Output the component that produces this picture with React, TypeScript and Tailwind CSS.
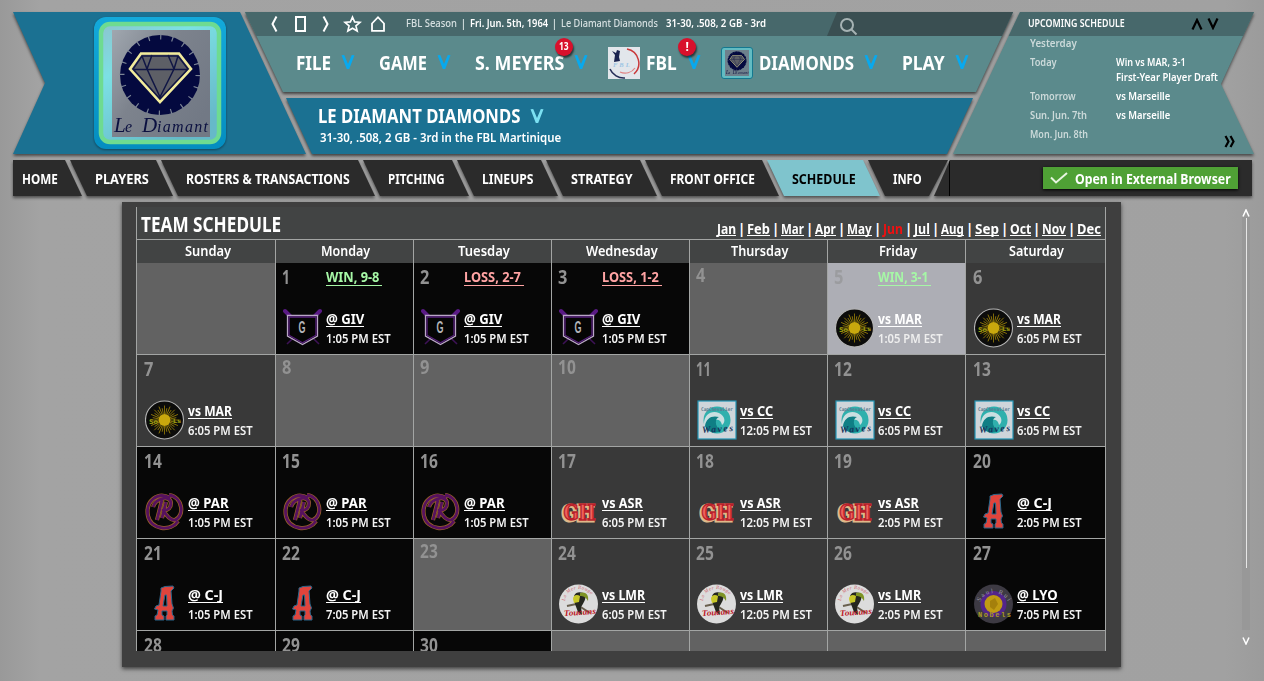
import { useLayoutEffect, useRef, useState } from 'react'
import type { ReactNode } from 'react'
import clsx from 'clsx'

// Condensed label: squeezes its text horizontally into the given width
function Fit({ w, className, children }: { w: number; className?: string; children: ReactNode }) {
  const ref = useRef<HTMLSpanElement>(null)
  const [scale, setScale] = useState(1)

  useLayoutEffect(() => {
    if (ref.current) setScale(w / ref.current.offsetWidth)
  }, [w])

  return (
    <span className={clsx('block shrink-0 whitespace-nowrap', className)} style={{ width: w }}>
      <span ref={ref} className="inline-block origin-left align-top" style={{ transform: `scaleX(${scale})` }}>
        {children}
      </span>
    </span>
  )
}

function Caret({ className }: { className: string }) {
  return (
    <svg viewBox="0 0 14 15" className={className} fill="currentColor">
      <path d="M0.500 0.300 L3.200 0 L7 9 L10.800 0 L13.500 0.300 L8.200 14 H5.800 Z" />
    </svg>
  )
}

function DiamantArt() {
  return (
    <>
      <circle cx="48" cy="45" r="40" fill="#04093f" />
      <circle cx="48" cy="45" r="38" fill="none" stroke="#7c8595" strokeWidth="5" strokeDasharray="1.2 10.73" />
      <path d="M29 23.5 H67 L79 39 L48 72 L18 39 Z" fill="#5d5f66" stroke="#f2ec9c" strokeWidth="2.6" />
      <path d="M30 26 H66 L76 39 L48 69 L21 39 Z M21 39.500 H76 M40 25 L35 39 L48 67 L62 39 L56 25 M30 26 L35 39 M66 26 L62 39" fill="none" stroke="#101645" strokeWidth="1.5" />
      <g fontFamily="Liberation Serif, serif" fontStyle="italic" fill="#0b1040">
        <text x="2" y="102" fontSize="21">L</text>
        <text x="13" y="102" fontSize="16">e</text>
        <text x="30" y="102" fontSize="21">D</text>
        <text x="45" y="102" textLength="51" fontSize="16">iamant</text>
      </g>
    </>
  )
}

function TeamBadge() {
  return (
    <svg viewBox="0 0 132 132" className="h-[132px] w-[132px] [filter:drop-shadow(0_1px_1px_rgba(0,0,0,0.4))]">
      <defs>
        <linearGradient id="plate" x1="0" y1="0" x2="0.6" y2="1">
          <stop offset="0" stopColor="#8cc4cf" />
          <stop offset="0.35" stopColor="#7ce0e4" />
          <stop offset="1" stopColor="#66b9c9" />
        </linearGradient>
        <linearGradient id="steel" x1="0" y1="0" x2="1" y2="0.7">
          <stop offset="0" stopColor="#a0a7af" />
          <stop offset="0.45" stopColor="#7d838d" />
          <stop offset="1" stopColor="#727985" />
        </linearGradient>
        <linearGradient id="rim" x1="0" y1="0" x2="0" y2="1">
          <stop offset="0" stopColor="#13aadb" />
          <stop offset="1" stopColor="#048dc0" />
        </linearGradient>
      </defs>
      <rect width="132" height="132" rx="12" fill="url(#rim)" />
      <rect x="7" y="7" width="118" height="118" rx="9" fill="url(#plate)" stroke="#6edb91" strokeWidth="4.500" />
      <rect x="18" y="13" width="98" height="107" fill="url(#steel)" />
      <g transform="translate(18 13)"><DiamantArt /></g>
    </svg>
  )
}

function SmallDiamant() {
  return (
    <svg viewBox="0 0 32 32" className="ml-5 size-8 shrink-0">
      <rect x="0.5" y="0.5" width="31" height="31" rx="2.5" fill="#62bcc2" stroke="#14788f" />
      <rect x="4" y="3" width="24" height="26" fill="#6e808c" />
      <g transform="translate(4.500 3) scale(0.24)"><DiamantArt /></g>
    </svg>
  )
}

function LeagueLogo() {
  return (
    <svg viewBox="0 0 32 32" className="ml-5 size-8 shrink-0">
      <rect width="32" height="32" fill="#e2e6eb" />
      <path d="M19 2 A14.500 14.500 0 0 1 26 27" fill="none" stroke="#c9393b" strokeWidth="1.5" />
      <path d="M12 25 A12 12 0 0 0 27 21" fill="none" stroke="#e08383" strokeWidth="1.2" />
      <path d="M2 22 A15 15 0 0 0 17 31" fill="none" stroke="#252d57" strokeWidth="1.6" />
      <path d="M4 4 L8 6 L9 3 L12 4 L11 10 L12 14 L6 15 L7 8 Z" fill="#1b2350" />
      <text x="5" y="20" fontFamily="Liberation Serif, serif" fontStyle="italic" fontWeight="bold" fontSize="6.500" letterSpacing="2" fill="#9cc5e4">FBL</text>
    </svg>
  )
}

function Griffons() {
  return (
    <>
      <path d="M3 4 L36 36 M37 4 L4 36" stroke="#3d1256" strokeWidth="1.6" />
      <path d="M2 3 L8 9 M37 3 L31 9" stroke="#5a1a85" strokeWidth="4" strokeLinecap="round" />
      <path d="M4.500 7.500 H34.500 V28 L19.500 36.500 L4.500 28 Z" fill="#050505" stroke="#b9a6c6" strokeWidth="1.3" />
      <path d="M6 9 H33 V27.200 L19.500 34.800 L6 27.200 Z" fill="none" stroke="#58207e" strokeWidth="1.3" />
      <text x="15.500" y="24.500" textLength="7" lengthAdjust="spacingAndGlyphs" fontFamily="Liberation Sans, sans-serif" fontWeight="bold" fontSize="16" fill="#b4b4b8">G</text>
    </>
  )
}

const RAYS = Array.from({ length: 32 }, (_, i) => i * 11.25)

function Sols() {
  return (
    <>
      <circle cx="19.500" cy="20" r="19" fill="#0c0c0b" stroke="#b5b5b5" strokeWidth="1.1" />
      {RAYS.map((a, i) => (
        <path key={a} d={i % 2 ? 'M19.500 8 V14' : 'M19.500 5.500 V14'} stroke="#9b8108" strokeWidth="0.8" transform={`rotate(${a} 19.500 20)`} />
      ))}
      <circle cx="19.500" cy="20" r="6" fill="#c9a80d" />
      <g fontFamily="DejaVu Sans, sans-serif" fontWeight="bold" fill="#98980f">
        <text x="4" y="24" textLength="9" lengthAdjust="spacingAndGlyphs" fontSize="6.500">So</text>
        <text x="28" y="23" textLength="8" lengthAdjust="spacingAndGlyphs" fontSize="6">Ls</text>
      </g>
    </>
  )
}

function Waves() {
  return (
    <>
      <rect x="1" y="1" width="38" height="38" fill="#cfd5da" stroke="#2294b4" strokeWidth="1.2" />
      <circle cx="20" cy="20" r="13.500" fill="#2fb0ad" />
      <path d="M7 24 C7 14 15 10 22 13 C28 16 29 22 25 25 C24 19 18 18 15 23 C13 27 16 30 19 32 C12 32 7 29 7 24 Z" fill="#c9dfe1" />
      <path d="M8 26 C9 18 15 15 22 17 C18 18 17 26 24 31 C18 34 10 32 8 26 Z" fill="#0f7f85" />
      <text x="4" y="10.500" textLength="32" lengthAdjust="spacingAndGlyphs" fontFamily="DejaVu Sans Mono, monospace" fontWeight="bold" fontSize="5" fill="#5c7a90">CapChevalier</text>
      <text x="5" y="32" textLength="31" fontFamily="Liberation Serif, serif" fontStyle="italic" fontWeight="bold" fontSize="9.500" fill="#16355c" transform="rotate(-4 20 30)">Waves</text>
    </>
  )
}

function Royals() {
  const swirl = 'M8 15 C10 7 25 2 26 11 C26 17 21 19 18 18 C21 23 25 29 30 28 C40 24 38 5 24 3 M17 8 L12 28 M21 10 L17 26 M25 6 C13 -1 0 9 3 24 C6 38 26 40 33 29'
  return (
    <>
      <path d={swirl} fill="none" stroke="#9a6526" strokeWidth="4.200" strokeLinejoin="round" />
      <path d={swirl} fill="none" stroke="#57125e" strokeWidth="2.800" strokeLinejoin="round" />
    </>
  )
}

function GrandHotel() {
  return (
    <g fontFamily="DejaVu Serif, serif" fontWeight="bold" fontSize="22">
      <g fill="#e0b98a" stroke="#e0b98a" strokeWidth="3">
        <text x="3" y="29" textLength="15" lengthAdjust="spacingAndGlyphs">G</text>
        <text x="18" y="29" textLength="17" lengthAdjust="spacingAndGlyphs">H</text>
      </g>
      <g fill="#f0625c" stroke="#b81f2b" strokeWidth="1.400">
        <text x="4.500" y="27.500" textLength="15" lengthAdjust="spacingAndGlyphs">G</text>
        <text x="19.500" y="27.500" textLength="17" lengthAdjust="spacingAndGlyphs">H</text>
      </g>
    </g>
  )
}

function Aces() {
  return (
    <path
      d="M16 4 L20 2.500 L28 2 L29 4 L26 7 L27 20 L28.500 24 L27 27 L27.500 31 L29 32 V36 H21 V32 L22 31 V27 H17 L17 31 L19 32 V36 H10 V32 L12 31 L13 26 L9.500 25 L11 22 L14 21 L16 7 Z M20 11 L18 22 H22 L21.500 11 Z"
      fill="#e0443c"
      fillRule="evenodd"
      stroke="#28678c"
      strokeWidth="1"
    />
  )
}

function Toucans() {
  return (
    <>
      <circle cx="19.500" cy="20" r="19.500" fill="#dcdcdc" />
      <path id="arc" d="M6 17 A14 12 0 0 1 34 17" fill="none" />
      <text fontFamily="Liberation Serif, serif" fontStyle="italic" fontSize="5" fill="#cc5968"><textPath href="#arc" textLength="34">La Mer Rouge</textPath></text>
      <path d="M8 22 L17 20 L31 29" stroke="#69604f" strokeWidth="2" fill="none" />
      <path d="M15 12 C17 7 23 8 26 10 C28 14 24 20 22 23 L23 31 L19 28 L16 20 Z" fill="#25271f" />
      <path d="M14 15 C14 11 18 10 21 12 L20 18 L15 19 Z" fill="#c8c829" />
      <path d="M21 9 C27 7 30 11 29 17 C27 13 24 12 21 12 Z" fill="#7f9424" />
      <text x="5" y="31" textLength="32" lengthAdjust="spacingAndGlyphs" fontFamily="Liberation Serif, serif" fontStyle="italic" fontWeight="bold" fontSize="8.500" fill="#bd1524" transform="rotate(-4 20 30)">Toucans</text>
    </>
  )
}

function Nobels() {
  return (
    <>
      <circle cx="19.500" cy="20" r="19.500" fill="#3d3a43" />
      <circle cx="19.500" cy="20" r="13" fill="#53258b" />
      <circle cx="19.500" cy="20" r="9" fill="#c09b13" />
      <path d="M16 17 L21 14 L24 20 L20 26 L16 23 Z" fill="#a4800c" />
      <path id="rim-arc" d="M6 18 A15 14 0 0 1 34 18" fill="none" />
      <text fontFamily="Liberation Serif, serif" fontSize="6.500" fill="#9b98a3"><textPath href="#rim-arc" textLength="39">Saul Ruiz</textPath></text>
      <text x="4" y="32.500" textLength="33" fontFamily="Liberation Mono, monospace" fontWeight="bold" fontSize="7" fill="#aa9b22">Nobels</text>
    </>
  )
}

type Team = { label: string; w: number; art: ReactNode }

const GIV: Team = { label: '@ GIV', w: 38, art: <Griffons /> }
const MAR: Team = { label: 'vs MAR', w: 44, art: <Sols /> }
const CC: Team = { label: 'vs CC', w: 33, art: <Waves /> }
const PAR: Team = { label: '@ PAR', w: 41, art: <Royals /> }
const ASR: Team = { label: 'vs ASR', w: 41, art: <GrandHotel /> }
const CJ: Team = { label: '@ C-J', w: 35, art: <Aces /> }
const LMR: Team = { label: 'vs LMR', w: 43, art: <Toucans /> }
const LYO: Team = { label: '@ LYO', w: 41, art: <Nobels /> }

type Day = { day?: number; team?: Team; time?: string; result?: string; resultW?: number; today?: boolean; away?: boolean }

const days: Day[] = [
  {},
  { day: 1, team: GIV, time: '1:05', result: 'WIN, 9-8', resultW: 53 },
  { day: 2, team: GIV, time: '1:05', result: 'LOSS, 2-7', resultW: 57 },
  { day: 3, team: GIV, time: '1:05', result: 'LOSS, 1-2', resultW: 57 },
  { day: 4 },
  { day: 5, team: MAR, time: '1:05', result: 'WIN, 3-1', resultW: 50, today: true },
  { day: 6, team: MAR, time: '6:05' },
  { day: 7, team: MAR, time: '6:05' },
  { day: 8 },
  { day: 9 },
  { day: 10 },
  { day: 11, team: CC, time: '12:05' },
  { day: 12, team: CC, time: '6:05' },
  { day: 13, team: CC, time: '6:05' },
  { day: 14, team: PAR, time: '1:05' },
  { day: 15, team: PAR, time: '1:05' },
  { day: 16, team: PAR, time: '1:05' },
  { day: 17, team: ASR, time: '6:05' },
  { day: 18, team: ASR, time: '12:05' },
  { day: 19, team: ASR, time: '2:05' },
  { day: 20, team: CJ, time: '2:05' },
  { day: 21, team: CJ, time: '1:05' },
  { day: 22, team: CJ, time: '7:05' },
  { day: 23 },
  { day: 24, team: LMR, time: '6:05' },
  { day: 25, team: LMR, time: '12:05' },
  { day: 26, team: LMR, time: '2:05' },
  { day: 27, team: LYO, time: '7:05' },
  { day: 28, away: true },
  { day: 29, away: true },
  { day: 30, away: true },
  {},
  {},
  {},
  {},
]

const weekdays = [
  { name: 'Sunday', w: 46, pad: 'pl-1' },
  { name: 'Monday', w: 49, pad: 'pl-0.5' },
  { name: 'Tuesday', w: 52, pad: 'pl-0.5' },
  { name: 'Wednesday', w: 72, pad: 'pl-0.5' },
  { name: 'Thursday', w: 57, pad: 'pl-0.5' },
  { name: 'Friday', w: 38, pad: 'pl-0.5' },
  { name: 'Saturday', w: 55, pad: 'pl-0.5' },
]

const months = [
  { name: 'Jan', w: 19 },
  { name: 'Feb', w: 23 },
  { name: 'Mar', w: 23 },
  { name: 'Apr', w: 21 },
  { name: 'May', w: 25 },
  { name: 'Jun', w: 20 },
  { name: 'Jul', w: 16 },
  { name: 'Aug', w: 23 },
  { name: 'Sep', w: 24 },
  { name: 'Oct', w: 21 },
  { name: 'Nov', w: 24 },
  { name: 'Dec', w: 24 },
]

const tabs = [
  { name: 'PLAYERS', w: 54, box: 'w-[103px]' },
  { name: 'ROSTERS & TRANSACTIONS', w: 164, box: 'w-[214px]' },
  { name: 'PITCHING', w: 57, box: 'w-[106px]' },
  { name: 'LINEUPS', w: 52, box: 'w-[101px]' },
  { name: 'STRATEGY', w: 62, box: 'w-[111px]' },
  { name: 'FRONT OFFICE', w: 85, box: 'w-[134px]' },
  { name: 'SCHEDULE', w: 64, box: 'w-[113px]', active: true },
]

const upcoming = [
  { day: 'Yesterday', dw: 47, h: 'h-[19px]', events: [] },
  { day: 'Today', dw: 27, h: 'h-[34px]', events: [{ text: 'Win vs MAR, 3-1', w: 70 }, { text: 'First-Year Player Draft', w: 102 }] },
  { day: 'Tomorrow', dw: 46, h: 'h-[19px]', events: [{ text: 'vs Marseille', w: 54 }] },
  { day: 'Sun. Jun. 7th', dw: 57, h: 'h-[19px]', events: [{ text: 'vs Marseille', w: 54 }] },
  { day: 'Mon. Jun. 8th', dw: 58, h: 'h-[19px]', events: [] },
]

function dayWidth(day: number) {
  if (day === 1) return 8
  if (day === 11) return 15
  return day < 10 ? 9.5 : 18
}

function DayCell({ cell, index }: { cell: Day; index: number }) {
  const { day, team, time, result, resultW, today } = cell
  const col = index % 7
  const away = cell.away || team?.label.startsWith('@')
  return (
    <div
      className={clsx(
        'h-[92px] border-r border-b border-[#a3a5a4]',
        today ? 'bg-[#adaeb5]' : away ? 'bg-[#070707]' : team ? 'bg-[#393939]' : 'bg-[#626262]',
        col === 0 || col === 6 ? 'pl-[7px]' : 'pl-1.5',
      )}
    >
      <div className={clsx('flex', team || away ? 'pt-0.5' : '')}>
        <div className="w-11">
          {day && (
            <Fit w={dayWidth(day)} className={clsx('text-[19px] leading-6 font-bold', today ? 'text-[#9b9c9f]' : 'text-[#929292]')}>
              {day}
            </Fit>
          )}
        </div>
        {result && resultW && (
          <div className={clsx('mt-[5px] h-4 border-b', result.startsWith('WIN') ? 'border-[#a6f7a6] text-[#a6f7a6]' : 'border-[#ffa3a3] text-[#ffa3a3]')}>
            <Fit w={resultW} className="mr-[3px] text-[13.500px] leading-[15px] font-bold">{result}</Fit>
          </div>
        )}
      </div>
      {team && (
        <div className="flex pt-[19px]">
          <svg viewBox="0 0 40 40" className="ml-px size-10 shrink-0">{team.art}</svg>
          <div className="ml-[3px] pt-0.5">
            <Fit w={team.w} className="h-[17px] border-b border-white text-[13.500px] leading-[18px] font-bold text-white">{team.label}</Fit>
            <Fit w={time === '12:05' ? 72 : 65} className={clsx('mt-[3px] text-[13px] leading-[17px] font-semibold', today ? 'text-[#eeeeee]' : 'text-[#f4f4f4]')}>{`${time} PM EST`}</Fit>
          </div>
        </div>
      )}
    </div>
  )
}

function Alert({ className, children }: { className: string; children: ReactNode }) {
  return (
    <span className={clsx('absolute -top-[13px] flex size-[18px] items-center justify-center rounded-full bg-[#d8102c] shadow-[1px_2px_2px_rgba(0,0,0,0.6)]', className)}>
      {children}
    </span>
  )
}

function MenuItem({ label, w, className }: { label: string; w: number; className?: string }) {
  return (
    <div className={clsx('flex items-center gap-2.5', className)}>
      <Fit w={w} className="text-[19.500px] leading-6 font-bold">{label}</Fit>
      <Caret className="h-[15px] w-3.5 text-[#08a9ee]" />
    </div>
  )
}

function TopBar() {
  return (
    <div className="flex h-6 bg-[#47686b] text-[11.500px] leading-[22px] font-medium text-[#d6e0e1]">
      <svg viewBox="0 0 120 24" className="ml-[25px] h-6 w-[120px] shrink-0" fill="none" stroke="#fff" strokeWidth="2">
        <path d="M6.500 4.500 L2.500 12 L6.500 19.500" />
        <rect x="26" y="5" width="9" height="14" />
        <path d="M53.500 4.500 L57.500 12 L53.500 19.500" />
        <path d="M82.500 5 L84.600 9.900 L90 10.300 L85.900 13.800 L87.200 19 L82.500 16.200 L77.800 19 L79.100 13.800 L75 10.300 L80.400 9.900 Z" strokeWidth="1.600" />
        <path d="M102 18.800 V11.500 L108 5.200 L114 11.500 V18.800 Z" strokeWidth="1.800" />
      </svg>
      <div className="ml-4 flex w-[421px] shrink-0">
        <Fit w={51}>FBL Season</Fit>
        <span className="w-[13px] text-center">|</span>
        <Fit w={78} className="font-semibold text-white">Fri. Jun. 5th, 1964</Fit>
        <span className="w-[13px] text-center">|</span>
        <Fit w={97}>Le Diamant Diamonds</Fit>
        <Fit w={100} className="ml-2 font-semibold text-white">31-30, .508, 2 GB - 3rd</Fit>
      </div>
      <div className="flex-1 bg-[#3a4f52] [clip-path:polygon(10px_0,100%_0,100%_100%,0_100%)]">
        <svg viewBox="0 0 18 18" className="mt-[6px] ml-[13px] size-[18px]" fill="none" stroke="#a6b3b4" strokeWidth="2">
          <circle cx="7" cy="7" r="6" />
          <path d="M11.500 11.500 L16.500 16.500" />
        </svg>
      </div>
    </div>
  )
}

function Header() {
  return (
    <header className="flex h-[142px] text-white">
      <div className="w-[293px] shrink-0 [filter:drop-shadow(0_2px_1.5px_rgba(0,0,0,0.55))]">
        <div className="h-full bg-[#1b7192] pt-[5px] pl-[81px] [clip-path:polygon(0_0,227px_0,100%_100%,0_100%,32px_71px)]">
          <TeamBadge />
        </div>
      </div>

      <div className="-ml-[61px] w-[768px] shrink-0">
        <div className="[filter:drop-shadow(0_2px_1.5px_rgba(0,0,0,0.6))]">
          <div className="h-20 bg-[#5b8a8c] [clip-path:polygon(0_0,100%_0,731px_100%,38px_100%)]">
            <TopBar />
            <div className="flex h-[53px] items-center pl-[51px]">
              <MenuItem label="FILE" w={35} />
              <MenuItem label="GAME" w={48} className="ml-6" />
              <div className="relative ml-6">
                <MenuItem label="S. MEYERS" w={89} />
                <Alert className="left-20">
                  <Fit w={10} className="text-[11px] font-bold">13</Fit>
                </Alert>
              </div>
              <LeagueLogo />
              <div className="relative ml-1.5">
                <MenuItem label="FBL" w={31} />
                <Alert className="left-8">
                  <Fit w={3} className="text-[12px] font-bold">!</Fit>
                </Alert>
              </div>
              <SmallDiamant />
              <MenuItem label="DIAMONDS" w={95} className="ml-1.5" />
              <MenuItem label="PLAY" w={43} className="ml-6" />
            </div>
          </div>
        </div>
        <div className="mt-1.5 ml-[41px] w-[687px] [filter:drop-shadow(0_2px_1.5px_rgba(0,0,0,0.6))]">
          <div className="h-14 bg-[#1b7192] pt-[6px] pl-8 [clip-path:polygon(0_0,100%_0,661px_100%,26px_100%)]">
            <div className="flex items-center gap-2.5">
              <Fit w={202} className="text-[20px] leading-6 font-bold">LE DIAMANT DIAMONDS</Fit>
              <Caret className="h-[15px] w-3.5 text-[#7be0f2]" />
            </div>
            <Fit w={241} className="ml-0.5 text-[13px] leading-[18px] font-semibold">31-30, .508, 2 GB - 3rd in the FBL Martinique</Fit>
          </div>
        </div>
      </div>

      <div className="-ml-[60px] w-[301px] shrink-0 [filter:drop-shadow(0_2px_1.5px_rgba(0,0,0,0.55))]">
        <div className="h-full bg-[#5b8a8c] [clip-path:polygon(67px_0,100%_0,268px_72px,100%_100%,0_100%)]">
          <div className="flex h-6 bg-[#47686b] pl-[75px]">
            <Fit w={97} className="text-[11.500px] leading-[22px] font-semibold">UPCOMING SCHEDULE</Fit>
            <svg viewBox="0 0 28 12" className="mt-1.5 ml-[66px] h-3 w-7" fill="none" stroke="#000" strokeWidth="2.200">
              <path d="M1.500 11.500 L6 2 L10.500 11.500 M17.500 0.500 L22 10 L26.500 0.500" />
            </svg>
          </div>
          <div className="-mt-px flex">
            <div className="pl-[77px] text-[11px] leading-[15px]">
              {upcoming.map(row => (
                <div key={row.day} className={clsx('flex', row.h)}>
                  <div className="w-[86px]">
                    <Fit w={row.dw} className="font-semibold text-[#ccdada]">{row.day}</Fit>
                  </div>
                  <div>
                    {row.events.map(event => (
                      <Fit key={event.text} w={event.w} className="font-semibold">{event.text}</Fit>
                    ))}
                  </div>
                </div>
              ))}
            </div>
            <svg viewBox="0 0 12 13" className="mt-[100px] ml-[6px] h-[13px] w-3 shrink-0" fill="none" stroke="#000" strokeWidth="2.200">
              <path d="M1.500 1 L4.500 6.500 L1.500 12 M6.500 1 L9.500 6.500 L6.500 12" />
            </svg>
          </div>
        </div>
      </div>
    </header>
  )
}

function Nav() {
  return (
    <nav className="mt-1.5 flex h-9 text-[14px] leading-[38px] font-bold text-white [filter:drop-shadow(0_2px_1.5px_rgba(0,0,0,0.5))]">
      <div className="w-[69px] shrink-0 bg-[#2b2b2b] pl-[9px] [clip-path:polygon(0_0,52px_0,100%_100%,0_100%)]">
        <Fit w={36}>HOME</Fit>
      </div>
      {tabs.map(tab => (
        <div
          key={tab.name}
          className={clsx(
            '-ml-3 shrink-0 pl-[25px] [clip-path:polygon(0_0,calc(100%-17px)_0,100%_100%,17px_100%)]',
            tab.box,
            tab.active ? 'bg-[#7fc4cd] text-black' : 'bg-[#2b2b2b]',
          )}
        >
          <Fit w={tab.w}>{tab.name}</Fit>
        </div>
      ))}
      <div className="-ml-3 w-20 shrink-0 bg-[#2b2b2b] pl-[25px] [clip-path:polygon(0_0,100%_0,61px_100%,17px_100%)]">
        <Fit w={29}>INFO</Fit>
      </div>
      <div className="-ml-3.5 flex w-[318px] shrink-0 bg-[#2b2b2b] [clip-path:polygon(16px_0,100%_0,100%_100%,0_100%)]">
        <div className="w-4 border-r border-black" />
        <div className="mt-[7px] ml-[93px] flex h-[22px] w-[195px] items-center bg-[#4fa135] pl-[7px] shadow-[0_1px_3px_#000]">
          <svg viewBox="0 0 18 12" className="h-3 w-[18px]" fill="none" stroke="#e7f5df" strokeWidth="2">
            <path d="M1 5.500 L6 10.500 L17 1" />
          </svg>
          <Fit w={156} className="ml-[7px] text-[14.500px] leading-[20px]">Open in External Browser</Fit>
        </div>
      </div>
    </nav>
  )
}

function Schedule() {
  return (
    <main className="ml-[109px] h-[465px] w-[999px] shrink-0 bg-[#3f3f3f] px-3.5 pt-[5px] shadow-[0_2px_4px_rgba(0,0,0,0.6)]">
      <div className="h-[444px] w-[970px] overflow-hidden border-l border-[#a3a5a4] text-white">
        <div className="flex h-8 justify-between border-r border-[#a3a5a4] bg-[#424444] pr-1 pl-1">
          <Fit w={140} className="text-[20.500px] leading-[34px] font-bold">TEAM SCHEDULE</Fit>
          <div className="mt-[13px] flex text-[14px] leading-[17px] font-bold">
            {months.map((month, i) => (
              <div key={month.name} className="flex">
                {i > 0 && <span className="w-[11px] text-center">|</span>}
                <Fit w={month.w} className={clsx('h-4', month.name === 'Jun' ? 'text-[#f01010]' : 'border-b border-white')}>{month.name}</Fit>
              </div>
            ))}
          </div>
        </div>
        <div className="grid grid-cols-[139px_repeat(5,138px)_140px]">
          {weekdays.map(day => (
            <div key={day.name} className={clsx('flex h-6 justify-center border-t border-r border-[#a3a5a4] bg-[#424444]', day.pad)}>
              <Fit w={day.w} className="text-[14px] leading-[22px] font-semibold">{day.name}</Fit>
            </div>
          ))}
          {days.map((cell, i) => (
            <DayCell key={i} cell={cell} index={i} />
          ))}
        </div>
      </div>
    </main>
  )
}

function Scrollbar() {
  return (
    <div className="ml-[121px] flex w-2 flex-col items-center pt-[7px]">
      <svg viewBox="0 0 8 8" className="size-2" fill="none" stroke="#fff" strokeWidth="1.500">
        <path d="M1 7.500 L4 1 L7 7.500" />
      </svg>
      <div className="flex h-[413px] w-2 justify-center bg-[#989898]">
        <div className="mt-px h-[350px] w-px bg-[#e6e6e6]" />
      </div>
      <svg viewBox="0 0 8 8" className="mt-[7px] size-2" fill="none" stroke="#fff" strokeWidth="1.500">
        <path d="M1 0.500 L4 7 L7 0.500" />
      </svg>
    </div>
  )
}

export default function App() {
  return (
    <div className="h-[681px] w-[1264px] overflow-hidden bg-[linear-gradient(90deg,#999_0,#a3a3a3_40px,#a1a1a1_1225px,#9b9b9b_100%)] pt-3 pl-[13px] font-['Noto_Sans','Open_Sans',sans-serif] [font-stretch:condensed]">
      <Header />
      <Nav />
      <div className="mt-1.5 flex">
        <Schedule />
        <Scrollbar />
      </div>
    </div>
  )
}
